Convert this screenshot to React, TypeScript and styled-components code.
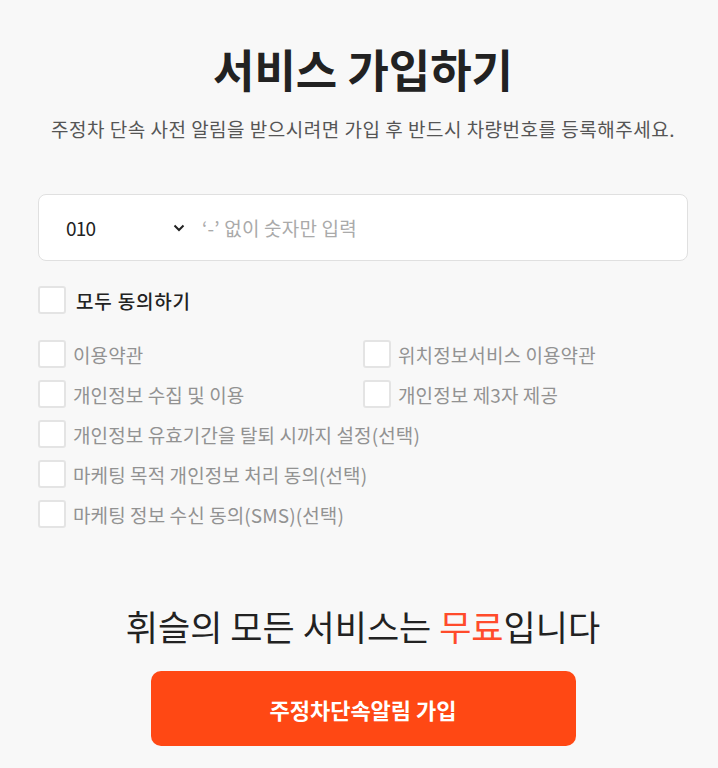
import React, { useState } from 'react';
import styled, { createGlobalStyle } from 'styled-components';

const GlobalStyle = createGlobalStyle`
  body {
    margin: 0;
    background: #f8f8f8;
    font-family: "Noto Sans CJK KR", "Noto Sans", sans-serif;
    color: #222;
  }
`;

const Container = styled.main`
  width: 650px;
  margin-left: 38px;
  padding-top: 37px;
  display: flex;
  flex-direction: column;
`;

const Title = styled.h1`
  margin: 0;
  text-align: center;
  font-size: 45px;
  font-weight: 700;
  line-height: 64px;
  color: #222;
`;

const Subtitle = styled.p`
  margin: 15px 0 0;
  text-align: center;
  font-size: 19px;
  line-height: 26px;
  letter-spacing: 0.5px;
  color: #555;
`;

const PhoneField = styled.div`
  margin-top: 52px;
  height: 67px;
  box-sizing: border-box;
  display: flex;
  align-items: center;
  background: #fff;
  border: 1px solid #e0e0e0;
  border-radius: 8px;
  padding-left: 27px;
`;

const PrefixSelect = styled.select`
  appearance: none;
  border: none;
  background: transparent;
  outline: none;
  width: 106px;
  font-family: inherit;
  font-size: 19px;
  color: #222;
  letter-spacing: -0.8px;
`;

const Chevron = styled.svg`
  width: 14px;
  height: 14px;
  margin-right: 14px;
  flex-shrink: 0;
`;

const NumberInput = styled.input`
  flex: 1;
  border: none;
  background: transparent;
  outline: none;
  font-family: inherit;
  font-size: 19px;
  letter-spacing: 0.2px;
  color: #222;

  &::placeholder {
    color: #aaa;
  }
`;

const Box = styled.input`
  appearance: none;
  margin: 0;
  width: 28px;
  height: 28px;
  flex-shrink: 0;
  box-sizing: border-box;
  background: #fff;
  border: 2px solid #e4e4e4;
  border-radius: 3px;
  cursor: pointer;

  &:checked {
    background: #ff4814;
    border-color: #ff4814;
  }
`;

const Check = styled.label<{ $strong?: boolean; $wide?: boolean }>`
  display: flex;
  align-items: center;
  gap: ${(p) => (p.$strong ? '10px' : '7px')};
  height: 28px;
  font-size: 19px;
  font-weight: ${(p) => (p.$strong ? 500 : 400)};
  color: ${(p) => (p.$strong ? '#222' : '#929292')};
  letter-spacing: ${(p) => (p.$strong ? '0.8px' : '0.1px')};
  grid-column: ${(p) => (p.$wide ? '1 / span 2' : 'auto')};
  cursor: pointer;
`;

const AllRow = styled.div`
  margin-top: 25px;
`;

const Terms = styled.div`
  margin-top: 26px;
  display: grid;
  grid-template-columns: 325px 1fr;
  row-gap: 12px;
`;

const FreeLine = styled.p`
  margin: 74px 0 0;
  text-align: center;
  font-size: 35px;
  font-weight: 400;
  line-height: 48px;
  color: #222;
`;

const Accent = styled.span`
  color: #ff4b2b;
`;

const JoinButton = styled.button`
  align-self: center;
  margin-top: 21px;
  width: 425px;
  height: 75px;
  border: none;
  border-radius: 10px;
  background: #ff4814;
  color: #fff;
  font-family: inherit;
  font-size: 22px;
  font-weight: 700;
  cursor: pointer;
`;

const terms = [
  { label: '이용약관' },
  { label: '위치정보서비스 이용약관' },
  { label: '개인정보 수집 및 이용' },
  { label: '개인정보 제3자 제공' },
  { label: '개인정보 유효기간을 탈퇴 시까지 설정(선택)', wide: true },
  { label: '마케팅 목적 개인정보 처리 동의(선택)', wide: true },
  { label: '마케팅 정보 수신 동의(SMS)(선택)', wide: true },
];

export default function App() {
  const [checked, setChecked] = useState<boolean[]>(terms.map(() => false));
  const all = checked.every(Boolean);

  function toggle(i: number) {
    setChecked((prev) => prev.map((v, j) => (j === i ? !v : v)));
  }

  function toggleAll() {
    setChecked(terms.map(() => !all));
  }

  return (
    <>
      <GlobalStyle />
      <Container>
        <Title>서비스 가입하기</Title>
        <Subtitle>주정차 단속 사전 알림을 받으시려면 가입 후 반드시 차량번호를 등록해주세요.</Subtitle>

        <PhoneField>
          <PrefixSelect defaultValue="010">
            <option>010</option>
            <option>011</option>
            <option>016</option>
            <option>017</option>
            <option>019</option>
          </PrefixSelect>
          <Chevron viewBox="0 0 14 14" fill="none" stroke="#222" strokeWidth="2">
            <path d="M2.5 4.5 L7 9 L11.5 4.5" />
          </Chevron>
          <NumberInput type="tel" placeholder="‘-’ 없이 숫자만 입력" />
        </PhoneField>

        <AllRow>
          <Check $strong>
            <Box type="checkbox" checked={all} onChange={toggleAll} />
            모두 동의하기
          </Check>
        </AllRow>

        <Terms>
          {terms.map((t, i) => (
            <Check key={t.label} $wide={t.wide}>
              <Box type="checkbox" checked={checked[i]} onChange={() => toggle(i)} />
              {t.label}
            </Check>
          ))}
        </Terms>

        <FreeLine>
          휘슬의 모든 서비스는 <Accent>무료</Accent>입니다
        </FreeLine>
        <JoinButton>주정차단속알림 가입</JoinButton>
      </Container>
    </>
  );
}
